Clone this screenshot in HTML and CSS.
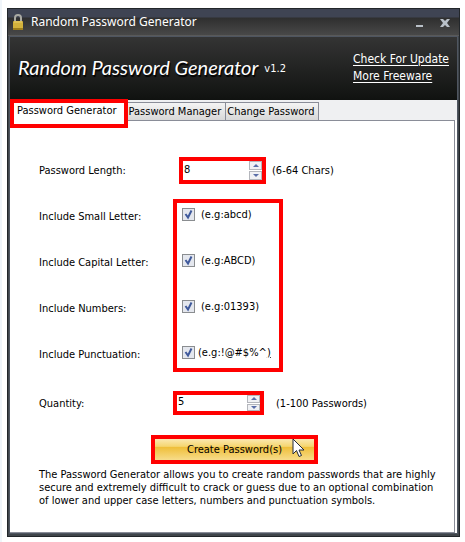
FILE: index.html
```html
<!DOCTYPE html>
<html lang="en">
<head>
  <meta charset="UTF-8">
  <title>Random Password Generator</title>
  <link rel="stylesheet" href="styles.css">
</head>
<body>

  <div class="window">
    <header class="titlebar">
      <svg class="lock" width="12" height="17" viewBox="0 0 12 17">
        <path d="M3 8V4a3 3 0 0 1 6 0v4" fill="none" stroke="#a9a9a2" stroke-width="2"/>
        <rect x="1" y="7" width="10" height="9" rx="1" fill="#d3b23c"/>
        <path d="M1 15h10" stroke="#9c7d1c" stroke-width="2"/>
        <path d="M2 8h8" stroke="#ead06c"/>
      </svg>
      <h1>Random Password Generator</h1>
      <button class="win-btn" type="button" aria-label="Minimize">
        <svg width="10" height="10" viewBox="0 0 10 10"><path d="M1 8h7" stroke="#b9c0c8" stroke-width="2"/></svg>
      </button>
      <button class="win-btn" type="button" aria-label="Close">
        <svg width="10" height="10" viewBox="0 0 10 10"><path d="M0 1h3l2 2 2-2h3L7 5l3 4H7L5 7 3 9H0l3-4z" fill="#b9c0c8"/></svg>
      </button>
    </header>

    <div class="client">
      <div class="banner">
        <p class="brand">Random Password Generator</p>
        <span class="version">v1.2</span>
        <nav class="links">
          <a href="#">Check For Update</a>
          <a href="#">More Freeware</a>
        </nav>
      </div>

      <div class="tabs">
        <button class="tab active marked" type="button">Password Generator</button>
        <button class="tab" type="button">Password Manager</button>
        <button class="tab" type="button">Change Password</button>
      </div>

      <form class="panel">
        <div class="row">
          <label class="name" for="length">Password Length:</label>
          <div class="spinner length marked">
            <input type="text" id="length" value="8">
            <div class="arrows">
              <button type="button" aria-label="More"><svg width="6" height="3" viewBox="0 0 6 3"><path d="M0 3l3-3 3 3z"/></svg></button>
              <button type="button" aria-label="Less"><svg width="6" height="3" viewBox="0 0 6 3"><path d="M0 0l3 3 3-3z"/></svg></button>
            </div>
          </div>
          <span class="hint">(6-64 Chars)</span>
        </div>

        <div class="options">
          <div class="names">
            <label for="small">Include Small Letter:</label>
            <label for="capital">Include Capital Letter:</label>
            <label for="numbers">Include Numbers:</label>
            <label for="punctuation">Include Punctuation:</label>
          </div>
          <div class="checks marked">
            <label><input type="checkbox" id="small" checked>(e.g:abcd)</label>
            <label><input type="checkbox" id="capital" checked>(e.g:ABCD)</label>
            <label><input type="checkbox" id="numbers" checked>(e.g:01393)</label>
            <label class="tight"><input type="checkbox" id="punctuation" checked>(e.g:!@#$%^<u>)</u></label>
          </div>
        </div>

        <div class="row">
          <label class="name" for="quantity">Quantity:</label>
          <div class="spinner quantity marked">
            <input type="text" id="quantity" value="5">
            <div class="arrows">
              <button type="button" aria-label="More"><svg width="6" height="3" viewBox="0 0 6 3"><path d="M0 3l3-3 3 3z"/></svg></button>
              <button type="button" aria-label="Less"><svg width="6" height="3" viewBox="0 0 6 3"><path d="M0 0l3 3 3-3z"/></svg></button>
            </div>
          </div>
          <span class="hint">(1-100 Passwords)</span>
        </div>

        <div class="action">
          <button class="create marked" type="button">Create Password(s)</button>
          <svg class="cursor" width="13" height="20" viewBox="0 0 13 20">
            <path d="M1 1v15l3.500-3.500L7 18.500l2.500-1L7 12h5z" fill="#fff" stroke="#222a3a"/>
          </svg>
        </div>

        <p class="about">The Password Generator allows you to create random passwords that are highly secure and extremely difficult to crack or guess due to an optional combination of lower and upper case letters, numbers and punctuation symbols.</p>
      </form>
    </div>
  </div>

</body>
</html>
```
FILE: styles.css
```css
* {
  box-sizing: border-box;
}

body {
  margin: 0;
  padding: 8px 5px 6px 7px;
  background: linear-gradient(to right, #f0f5fa 2px, #fff 2px);
  font-family: "DejaVu Sans Condensed", "Noto Sans", sans-serif;
  font-size: 11px;
  line-height: 13px;
  color: #000;
}

button,
input {
  font: inherit;
  color: inherit;
  margin: 0;
  padding: 0;
  border: none;
}

.window {
  padding: 0 1px 2px;
  background-color: #3f454a;
  border: 1px solid #22262a;
  border-top: none;
}

.titlebar {
  display: flex;
  align-items: center;
  height: 28px;
  margin: 0 -1px;
  padding: 0 9px 0 4px;
  background: linear-gradient(#3f4453 0, #3f4453 8px, #2f2f2f 9px, #484848 26px, #6a6a6a 27px);
  border-top: 1px solid #22262a;
}

.titlebar h1 {
  flex: 1;
  margin: 0 0 2px 7px;
  font-family: "Noto Sans", sans-serif;
  font-size: 12px;
  font-weight: normal;
  line-height: 16px;
  color: #fff;
}

.win-btn {
  width: 10px;
  height: 10px;
  margin-left: 15px;
  background: none;
  line-height: 0;
}

.client {
  background-color: #fff;
  border: 1px solid #4f5661;
}

.banner {
  display: flex;
  align-items: center;
  height: 63px;
  padding: 0 8px;
  background: linear-gradient(#343434, #101210);
  color: #fff;
}

.brand {
  margin: 0;
  padding-bottom: 4px;
  font-family: Lato, sans-serif;
  font-size: 20px;
  font-style: italic;
  line-height: 24px;
  text-shadow: 1px 2px 1px #000;
}

.version {
  margin-left: 6px;
}

.links {
  display: flex;
  flex-direction: column;
  align-items: flex-start;
  margin-left: auto;
  padding-bottom: 2px;
  font-size: 12px;
  line-height: 17px;
}

.links a {
  color: #fff;
  text-underline-offset: 2px;
}

.tabs {
  display: flex;
  align-items: flex-end;
  height: 20px;
  background-color: #eff0f2;
}

.tab {
  height: 18px;
  padding: 0 4px 0 1px;
  background: linear-gradient(#f4f4f4, #d8d8d8);
  border: 1px solid #8a8d98;
  border-bottom: none;
  white-space: nowrap;
}

.tab + .tab {
  margin-left: -1px;
}

.tab.active {
  position: relative;
  z-index: 1;
  align-self: flex-start;
  flex: none;
  height: 29px;
  margin-top: -1px;
  padding: 0 7px 6px 3px;
  background: #fff;
}

.panel {
  padding: 36px 14px 25px 29px;
  border: 1px solid #8a8d98;
  border-left: none;
  margin-right: 2px;
}

.marked,
.tab.marked {
  border: 4px solid #ff0000;
}

.row {
  display: flex;
  align-items: center;
}

.name,
.names {
  width: 134px;
}

.spinner {
  display: flex;
}

.spinner input {
  width: 100%;
  min-width: 0;
  padding: 0 1px 3px;
  outline: none;
}

.length {
  width: 87px;
  height: 27px;
  margin-left: 6px;
}

.quantity {
  width: 91px;
  height: 24px;
}

.arrows {
  display: flex;
  flex-direction: column;
  gap: 1px;
  flex: none;
  width: 13px;
}

.arrows button {
  flex: 1;
  display: flex;
  align-items: center;
  justify-content: center;
  background-color: #f0f1f4;
  border: 1px solid #b4b6bc;
}

.arrows path {
  fill: #5a6ea8;
}

.hint {
  margin-left: 6px;
}

.quantity + .hint {
  margin-left: 12px;
}

.options {
  display: flex;
  margin: 15px 0 19px;
}

.names,
.checks {
  display: flex;
  flex-direction: column;
  gap: 24px;
}

.names {
  padding-top: 6px;
}

.names label,
.checks label {
  display: flex;
  align-items: center;
  height: 22px;
}

.checks {
  width: 110px;
  padding: 0 0 5px 5px;
}

.checks input {
  appearance: none;
  width: 13px;
  height: 13px;
  margin-right: 6px;
  background: url("data:image/svg+xml,%3Csvg xmlns='http://www.w3.org/2000/svg' viewBox='0 0 11 11'%3E%3Cpath d='M2.500 5l2.500 3.500 3.500-7' fill='none' stroke='%23405a9c' stroke-width='2'/%3E%3C/svg%3E") #e4e7ee;
  border: 1px solid #8a8d90;
}

.checks .tight input {
  margin-right: 3px;
}

.action {
  position: relative;
  margin: 20px 0 4px 112px;
  width: 167px;
}

.create {
  display: block;
  width: 100%;
  height: 29px;
  background: linear-gradient(#fbe8b0 0, #f5d671 35%, #efbf3a 40%, #f7dc8a 100%);
}

.cursor {
  position: absolute;
  left: 141px;
  top: 3px;
}

.about {
  margin: 0;
}
```
